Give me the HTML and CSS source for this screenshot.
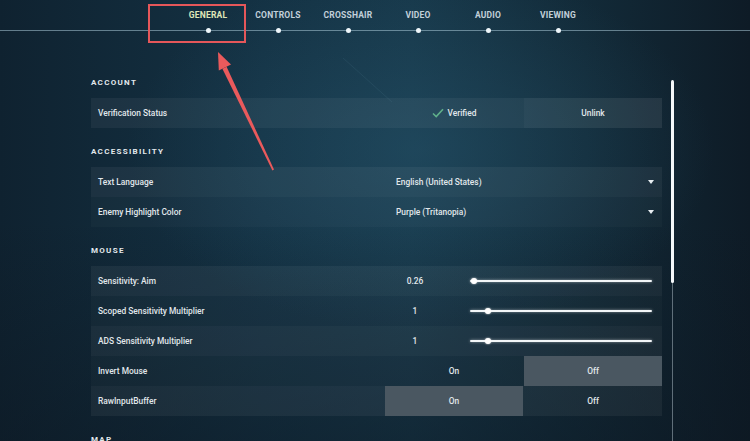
FILE: index.html
```html
<!DOCTYPE html>
<html>
<head>
<meta charset="utf-8">
<link rel="stylesheet" href="styles.css">
</head>
<body>
<div class="screen">
  <nav class="nav">
    <div class="tab active"><span>GENERAL</span><i class="dot"></i></div>
    <div class="tab"><span>CONTROLS</span><i class="dot"></i></div>
    <div class="tab"><span>CROSSHAIR</span><i class="dot"></i></div>
    <div class="tab"><span>VIDEO</span><i class="dot"></i></div>
    <div class="tab"><span>AUDIO</span><i class="dot"></i></div>
    <div class="tab"><span>VIEWING</span><i class="dot"></i></div>
  </nav>

  <main class="main">
    <div class="content">
      <h3 class="section">ACCOUNT</h3>
      <div class="rows">
        <div class="row">
          <div class="label">Verification Status</div>
          <div class="pair">
            <div class="cell"><svg class="check" viewBox="0 0 12 10" width="12" height="10"><path d="M1 5.5 L4.2 8.5 L11 1.2" fill="none" stroke="#5fb08a" stroke-width="1.6"/></svg>Verified</div>
            <div class="cell btn">Unlink</div>
          </div>
        </div>
      </div>

      <h3 class="section">ACCESSIBILITY</h3>
      <div class="rows">
        <div class="row">
          <div class="label">Text Language</div>
          <div class="dropdown"><span>English (United States)</span><i class="caret"></i></div>
        </div>
        <div class="row">
          <div class="label">Enemy Highlight Color</div>
          <div class="dropdown"><span>Purple (Tritanopia)</span><i class="caret"></i></div>
        </div>
      </div>

      <h3 class="section">MOUSE</h3>
      <div class="rows">
        <div class="row">
          <div class="label">Sensitivity: Aim</div>
          <div class="slider"><span class="num">0.26</span><div class="track"><i class="thumb" style="left:1%"></i></div></div>
        </div>
        <div class="row">
          <div class="label">Scoped Sensitivity Multiplier</div>
          <div class="slider"><span class="num">1</span><div class="track"><i class="thumb" style="left:9%"></i></div></div>
        </div>
        <div class="row">
          <div class="label">ADS Sensitivity Multiplier</div>
          <div class="slider"><span class="num">1</span><div class="track"><i class="thumb" style="left:9%"></i></div></div>
        </div>
        <div class="row">
          <div class="label">Invert Mouse</div>
          <div class="pair">
            <div class="cell">On</div>
            <div class="cell sel">Off</div>
          </div>
        </div>
        <div class="row">
          <div class="label">RawInputBuffer</div>
          <div class="pair">
            <div class="cell sel">On</div>
            <div class="cell">Off</div>
          </div>
        </div>
      </div>

      <h3 class="section">MAP</h3>
    </div>
    <div class="scrollbar"><div class="scroll-thumb"></div></div>
  </main>

  <div class="highlight"></div>
  <svg class="annot" viewBox="0 0 750 441" width="750" height="441">
    <path d="M343 58 L392 102" stroke="rgba(120,170,190,0.1)" stroke-width="1" fill="none"/>
    <polygon points="272.4,170.4 274,169.6 226.6,66.8 222.4,68.8" fill="#ea5a5c"/>
    <polygon points="218,52 231,64.5 218.8,70.5" fill="#ea5a5c"/>
  </svg>
</div>
</body>
</html>
```

FILE: styles.css
```css
* { box-sizing: border-box; margin: 0; padding: 0; }

html, body {
  width: 750px;
  height: 441px;
  overflow: hidden;
  background: #0f2130;
}

body {
  font-family: Roboto, "Liberation Sans", Arial, sans-serif;
  color: #dfe6ea;
}

.screen {
  position: relative;
  width: 750px;
  height: 441px;
  overflow: hidden;
  background:
    radial-gradient(ellipse 420px 260px at 420px 150px, rgba(40, 88, 112, 0.45), rgba(40, 88, 112, 0) 70%),
    linear-gradient(90deg, #0f2230 0%, #143244 35%, #17384a 55%, #122a38 78%, #0e1b26 100%);
}

.screen::after {
  content: "";
  position: absolute;
  left: 0; right: 0; bottom: 0;
  height: 220px;
  background: linear-gradient(180deg, rgba(10, 20, 30, 0) 0%, rgba(12, 22, 32, 0.45) 100%);
  pointer-events: none;
}

/* ---------- nav ---------- */
.nav {
  display: flex;
  height: 31px;
  padding-left: 173px;
  border-bottom: 1px solid rgba(170, 200, 215, 0.55);
  position: relative;
  z-index: 1;
}

.tab {
  position: relative;
  width: 70px;
  text-align: center;
  padding-top: 10px;
  font-size: 8.5px;
  font-weight: 700;
  line-height: 11px;
  letter-spacing: 0.2px;
  color: #c2d0da;
}

.tab.active { color: #dfe6b8; }

.dot {
  position: absolute;
  left: 33px;
  bottom: -3px;
  width: 5px;
  height: 5px;
  border-radius: 50%;
  background: #eef6fa;
}

/* ---------- main ---------- */
.main {
  display: flex;
  height: 410px;
  position: relative;
  z-index: 1;
}

.content {
  width: 571px;
  margin-left: 91px;
  padding-top: 45px;
}

.section {
  font-size: 8px;
  font-weight: 700;
  letter-spacing: 1.3px;
  line-height: 13px;
  color: #e2e8ec;
  margin-bottom: 9px;
}

.rows + .section { margin-top: 17px; }

.row {
  display: grid;
  grid-template-columns: 295px 276px;
  height: 30px;
  background: rgba(255, 255, 255, 0.025);
}

.rows .row:nth-child(odd) { background: rgba(255, 255, 255, 0.05); }

.label {
  display: flex;
  align-items: center;
  padding-left: 7px;
  font-size: 8.4px;
  font-weight: 500;
  color: #e2e8ec;
}

.pair {
  display: grid;
  grid-template-columns: 138px 138px;
  gap: 1px;
  margin-left: -1px;
}

.cell {
  display: flex;
  align-items: center;
  justify-content: center;
  font-size: 8.4px;
  font-weight: 500;
  color: #e2e8ec;
}

.cell.btn { background: rgba(255, 255, 255, 0.03); }
.cell.sel { background: #4a5761; }

.check { margin-right: 4px; }

.dropdown {
  display: flex;
  align-items: center;
  justify-content: space-between;
  padding: 0 8px 0 10px;
  font-size: 8.4px;
  font-weight: 500;
  color: #e2e8ec;
}

.caret {
  width: 0;
  height: 0;
  border-left: 3.5px solid transparent;
  border-right: 3.5px solid transparent;
  border-top: 4px solid #e8eef2;
}

.slider {
  display: flex;
  align-items: center;
}

.num {
  width: 58px;
  text-align: center;
  font-size: 8.4px;
  font-weight: 500;
  color: #e2e8ec;
}

.track {
  position: relative;
  margin-left: 26px;
  width: 182px;
  height: 2px;
  border-radius: 1px;
  background: #f2f6f8;
  box-shadow: 0 0 3px rgba(255, 255, 255, 0.55);
}

.thumb {
  position: absolute;
  top: -2px;
  width: 6px;
  height: 6px;
  margin-left: -1px;
  border-radius: 50%;
  background: #ffffff;
  box-shadow: 0 0 2px rgba(255, 255, 255, 0.8);
}

/* ---------- scrollbar ---------- */
.scrollbar {
  position: relative;
  width: 3px;
  margin-left: 9px;
  margin-top: 49px;
  display: flex;
  flex-direction: column;
  align-items: center;
  background: linear-gradient(90deg, transparent 1px, rgba(150, 165, 175, 0.6) 1px, rgba(150, 165, 175, 0.6) 2px, transparent 2px);
}

.scroll-thumb {
  width: 3px;
  height: 203px;
  border-radius: 1.5px;
  background: #f4f8fa;
}

/* ---------- annotations ---------- */
.highlight {
  position: absolute;
  left: 148px;
  top: 4px;
  width: 98px;
  height: 39px;
  border: 2px solid #e5575a;
  z-index: 2;
}

.annot {
  position: absolute;
  left: 0;
  top: 0;
  z-index: 2;
  pointer-events: none;
}
```
